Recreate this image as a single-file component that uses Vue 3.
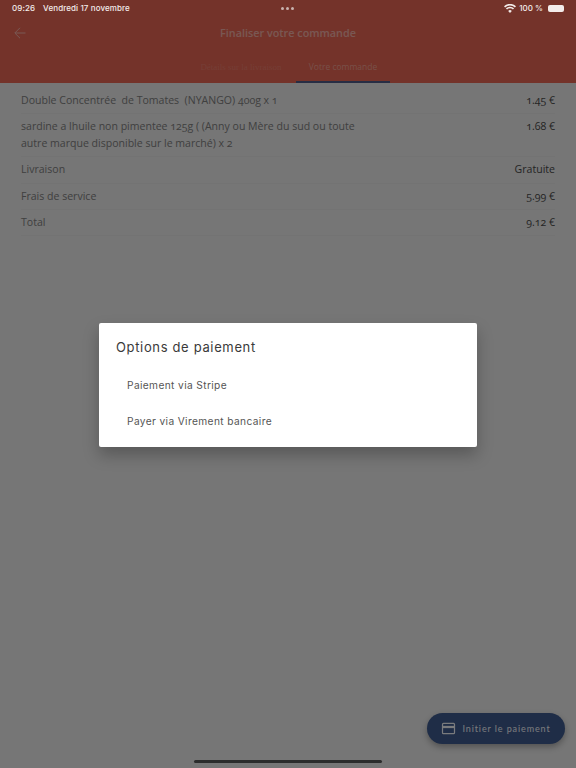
<template>
  <div class="screen">
    <header class="topbar">
      <div class="toolbar">
        <svg class="back" width="12" height="12" viewBox="0 0 12 12" fill="none" stroke="currentColor" stroke-width="1">
          <path d="M11.5 6H1M6 .8.8 6 6 11.2" />
        </svg>
        <span class="title">Finaliser votre commande</span>
      </div>
      <nav class="tabs">
        <span class="tab tab--first">Détails sur la livraison</span>
        <span class="tab tab--active">Votre commande</span>
      </nav>
    </header>

    <section class="lines">
      <div v-for="line in lines" :key="line.label" class="line">
        <span class="line-label">{{ line.label }}</span>
        <span class="line-value">{{ line.value }}</span>
      </div>
    </section>

    <button class="fab">
      <svg width="15" height="15" viewBox="0 0 16 16" fill="none" stroke="currentColor" stroke-width="1.3">
        <rect x="1.6" y="2.6" width="12.8" height="10.8" rx="1" />
        <path d="M1.6 6.4h12.8" stroke-width="2.4" />
      </svg>
      Initier le paiement
    </button>

    <div class="scrim"></div>

    <div class="statusbar">
      <div class="status-left">
        <span>09:26</span>
        <span>Vendredi 17 novembre</span>
      </div>
      <div class="status-dots"><i></i><i></i><i></i></div>
      <div class="status-right">
        <svg width="12" height="9" viewBox="0 0 12 9" fill="currentColor">
          <path d="M6 9 4.2 6.9a2.7 2.7 0 0 1 3.6 0Z" />
          <path d="M1.9 4.3a6 6 0 0 1 8.2 0L9 5.6a4.3 4.3 0 0 0-6 0Z" />
          <path d="M0 2.2a8.9 8.9 0 0 1 12 0l-1.1 1.2a7.2 7.2 0 0 0-9.8 0Z" />
        </svg>
        <span>100 %</span>
        <span class="battery"></span>
      </div>
    </div>

    <div class="dialog">
      <h2 class="dialog-title">Options de paiement</h2>
      <div class="option">Paiement via Stripe</div>
      <div class="option">Payer via Virement bancaire</div>
    </div>

    <div class="home-bar"></div>
  </div>
</template>

<script setup>
const lines = [
  { label: 'Double Concentrée\u00a0 de Tomates\u00a0 (NYANGO) 400g x 1', value: '1.45 €' },
  { label: 'sardine a lhuile non pimentee 125g ( (Anny ou Mère du sud ou toute autre marque disponible sur le marché) x 2', value: '1.68 €' },
  { label: 'Livraison', value: 'Gratuite' },
  { label: 'Frais de service', value: '5.99 €' },
  { label: 'Total', value: '9.12 €' },
]
</script>

<style>
body {
  background: #757575;
}
</style>

<style scoped>
.screen {
  position: relative;
  width: 576px;
  height: 768px;
  overflow: hidden;
  background: #ececec;
  font-family: "Open Sans", "Liberation Sans", sans-serif;
}
.topbar {
  height: 83px;
  box-sizing: border-box;
  padding-top: 20px;
  background: #e86654;
  color: #fff;
  display: flex;
  flex-direction: column;
}
.toolbar {
  position: relative;
  height: 25px;
  display: flex;
  align-items: center;
  justify-content: center;
}
.back {
  position: absolute;
  left: 14px;
  top: 7px;
  opacity: 0.5;
}
.title {
  font-size: 10.8px;
  font-weight: 600;
  opacity: 0.48;
}
.tabs {
  margin-top: 9px;
  flex: 1;
  display: flex;
  justify-content: center;
}
.tab {
  width: 94px;
  text-align: center;
  font-size: 8.5px;
  line-height: 26px;
  white-space: nowrap;
  color: #f2a79b;
}
.tab--first {
  width: 110px;
  font-family: "Liberation Serif", serif;
  font-size: 9px;
  opacity: 0.35;
}
.tab--active {
  opacity: 0.9;
  height: 29px;
  box-sizing: border-box;
  border-bottom: 2px solid #3e5a8e;
}
.lines {
  padding: 4px 21px 0;
}
.line {
  display: flex;
  justify-content: space-between;
  gap: 60px;
  padding: 4.9px 0;
  font-size: 10.55px;
  line-height: 16.6px;
  color: #808080;
  box-shadow: 0 1px 0 #e6e6e6;
  font-variant-numeric: oldstyle-nums;
}
.line-label {
  max-width: 340px;
}
.line-value {
  color: #4a4a4a;
  white-space: nowrap;
}
.fab {
  position: absolute;
  right: 11px;
  bottom: 24px;
  width: 138px;
  height: 31px;
  border: 0;
  border-radius: 16px;
  background: #3e5a8e;
  color: #f4f6fb;
  font: 400 9px "Lato", sans-serif;
  letter-spacing: 0.9px;
  display: flex;
  align-items: center;
  justify-content: center;
  gap: 6px;
  padding: 0;
  box-shadow: 0 3px 6px rgba(0, 0, 0, 0.3);
}
.scrim {
  position: absolute;
  inset: 0;
  background: rgba(0, 0, 0, 0.5);
}
.statusbar {
  position: absolute;
  top: 0;
  left: 0;
  right: 0;
  height: 16px;
  padding: 0 12px;
  display: flex;
  align-items: center;
  justify-content: space-between;
  color: #f3ecea;
  font: 500 8px/16px "Inter", sans-serif;
}
.status-left {
  display: flex;
  gap: 8px;
  letter-spacing: 0.1px;
}
.status-dots {
  position: absolute;
  left: 281px;
  top: 6.5px;
  display: flex;
  gap: 2px;
}
.status-dots i {
  width: 3px;
  height: 3px;
  border-radius: 50%;
  background: #c9b3af;
}
.status-right {
  display: flex;
  align-items: center;
  gap: 3px;
}
.battery {
  display: block;
  width: 16px;
  height: 7px;
  margin-left: 2px;
  background: #f3ecea;
  border-radius: 2px;
}
.dialog {
  position: absolute;
  left: 99px;
  top: 323px;
  width: 378px;
  height: 124px;
  background: #fff;
  border-radius: 2px;
  box-shadow: 0 8px 16px rgba(0, 0, 0, 0.25);
  color: #3a3a3a;
}
.dialog-title {
  margin: 0;
  padding: 13.5px 17px 0;
  font: 400 13px/20px "Inter", "Liberation Sans", sans-serif;
  letter-spacing: 0.65px;
}
.option {
  padding-left: 28px;
  height: 36px;
  display: flex;
  align-items: center;
  font: 400 10.2px "Inter", "Liberation Sans", sans-serif;
  color: #555;
  letter-spacing: 0.37px;
}
.dialog-title + .option {
  margin-top: 10.5px;
}
.home-bar {
  position: absolute;
  left: 194px;
  bottom: 5px;
  width: 188px;
  height: 3px;
  border-radius: 2px;
  background: #2c2c2c;
}
</style>
